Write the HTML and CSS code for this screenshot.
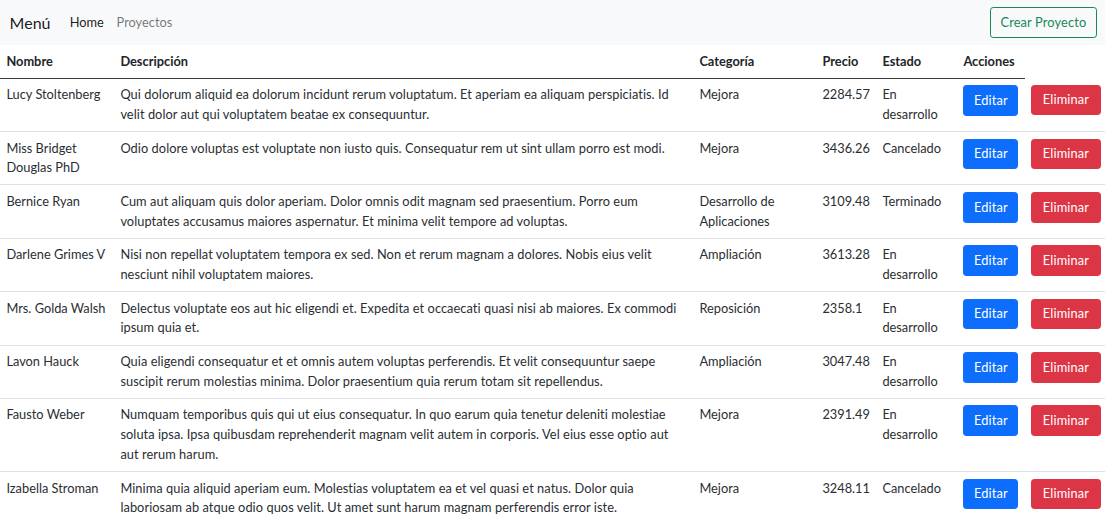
FILE: index.html
```html
<!DOCTYPE html>
<html lang="es">
<head>
<meta charset="utf-8">
<title>Proyectos</title>
<link rel="stylesheet" href="styles.css">
</head>
<body>
<nav class="navbar">
  <div class="nav-left">
    <a class="brand" href="#">Menú</a>
    <a class="nav-link active" href="#">Home</a>
    <a class="nav-link" href="#">Proyectos</a>
  </div>
  <a class="btn btn-outline-success" href="#">Crear Proyecto</a>
</nav>
<table class="table">
  <colgroup>
    <col class="c-nombre"><col class="c-desc"><col class="c-cat"><col class="c-precio"><col class="c-estado"><col class="c-acc"><col class="c-del">
  </colgroup>
  <thead>
    <tr><th>Nombre</th><th>Descripción</th><th>Categoría</th><th>Precio</th><th>Estado</th><th>Acciones</th></tr>
  </thead>
  <tbody>
    <tr><td>Lucy Stoltenberg</td><td class="desc">Qui dolorum aliquid ea dolorum incidunt rerum voluptatum. Et aperiam ea aliquam perspiciatis. Id velit dolor aut qui voluptatem beatae ex consequuntur.</td><td>Mejora</td><td>2284.57</td><td>En desarrollo</td><td><a class="btn btn-primary" href="#">Editar</a></td><td><a class="btn btn-danger" href="#">Eliminar</a></td></tr>
    <tr><td>Miss Bridget Douglas PhD</td><td class="desc">Odio dolore voluptas est voluptate non iusto quis. Consequatur rem ut sint ullam porro est modi.</td><td>Mejora</td><td>3436.26</td><td>Cancelado</td><td><a class="btn btn-primary" href="#">Editar</a></td><td><a class="btn btn-danger" href="#">Eliminar</a></td></tr>
    <tr><td>Bernice Ryan</td><td class="desc">Cum aut aliquam quis dolor aperiam. Dolor omnis odit magnam sed praesentium. Porro eum voluptates accusamus maiores aspernatur. Et minima velit tempore ad voluptas.</td><td>Desarrollo de Aplicaciones</td><td>3109.48</td><td>Terminado</td><td><a class="btn btn-primary" href="#">Editar</a></td><td><a class="btn btn-danger" href="#">Eliminar</a></td></tr>
    <tr><td>Darlene Grimes V</td><td class="desc">Nisi non repellat voluptatem tempora ex sed. Non et rerum magnam a dolores. Nobis eius velit nesciunt nihil voluptatem maiores.</td><td>Ampliación</td><td>3613.28</td><td>En desarrollo</td><td><a class="btn btn-primary" href="#">Editar</a></td><td><a class="btn btn-danger" href="#">Eliminar</a></td></tr>
    <tr><td>Mrs. Golda Walsh</td><td class="desc">Delectus voluptate eos aut hic eligendi et. Expedita et occaecati quasi nisi ab maiores. Ex commodi ipsum quia et.</td><td>Reposición</td><td>2358.1</td><td>En desarrollo</td><td><a class="btn btn-primary" href="#">Editar</a></td><td><a class="btn btn-danger" href="#">Eliminar</a></td></tr>
    <tr><td>Lavon Hauck</td><td class="desc">Quia eligendi consequatur et et omnis autem voluptas perferendis. Et velit consequuntur saepe suscipit rerum molestias minima. Dolor praesentium quia rerum totam sit repellendus.</td><td>Ampliación</td><td>3047.48</td><td>En desarrollo</td><td><a class="btn btn-primary" href="#">Editar</a></td><td><a class="btn btn-danger" href="#">Eliminar</a></td></tr>
    <tr><td>Fausto Weber</td><td class="desc">Numquam temporibus quis qui ut eius consequatur. In quo earum quia tenetur deleniti molestiae soluta ipsa. Ipsa quibusdam reprehenderit magnam velit autem in corporis. Vel eius esse optio aut aut rerum harum.</td><td>Mejora</td><td>2391.49</td><td>En desarrollo</td><td><a class="btn btn-primary" href="#">Editar</a></td><td><a class="btn btn-danger" href="#">Eliminar</a></td></tr>
    <tr><td>Izabella Stroman</td><td class="desc">Minima quia aliquid aperiam eum. Molestias voluptatem ea et vel quasi et natus. Dolor quia laboriosam ab atque odio quos velit. Ut amet sunt harum magnam perferendis error iste.</td><td>Mejora</td><td>3248.11</td><td>Cancelado</td><td><a class="btn btn-primary" href="#">Editar</a></td><td><a class="btn btn-danger" href="#">Eliminar</a></td></tr>
  </tbody>
</table>
</body>
</html>
```
FILE: styles.css
```css
* { box-sizing: border-box; }
html, body { margin: 0; padding: 0; }
body {
  font-family: Lato, "Noto Sans", sans-serif;
  font-size: 12.8px;
  line-height: 1.5;
  color: #2a2e32;
  background: #fff;
}
a { text-decoration: none; }
.navbar {
  display: flex;
  align-items: center;
  justify-content: space-between;
  background: #f8f9fa;
  padding: 6.6px 8px 6.6px 9.6px;
}
.nav-left { display: flex; align-items: center; }
.brand {
  font-size: 16px;
  color: rgba(0,0,0,.9);
  margin-right: 12.8px;
  line-height: 1.5;
}
.nav-link {
  color: rgba(0,0,0,.55);
  padding: 6.4px;
}
.nav-link.active { color: rgba(0,0,0,.9); }
.btn {
  display: inline-block;
  padding: 4.8px 10.4px;
  border: 1px solid transparent;
  border-radius: 3.2px;
  font-size: 12.8px;
  line-height: 19.2px;
  letter-spacing: 0.15px;
  text-align: center;
  white-space: nowrap;
}
.btn-outline-success { color: #198754; border-color: #198754; padding: 4.8px 9.6px; }
.btn-primary { color: #fff; background: #0d6efd; border-color: #0d6efd; padding: 4.8px 9.6px; }
.btn-danger { color: #fff; background: #dc3545; border-color: #dc3545; }
.table {
  width: 100%;
  border-collapse: collapse;
  table-layout: fixed;
  vertical-align: top;
  line-height: 19.8px;
}
.c-nombre { width: 114px; }
.c-desc { width: 579px; }
.c-cat { width: 123px; }
.c-precio { width: 60px; }
.c-estado { width: 81px; }
.c-acc { width: 68px; }
.c-del { width: 80px; }
.table th, .table td {
  padding: 6.4px;
  text-align: left;
  vertical-align: top;
}
.table th {
  font-weight: 700;
  color: #212529;
  border-bottom: 1.5px solid #3a3d40;
}
.table td { border-bottom: 1px solid #dee2e6; }
.table td.desc { letter-spacing: 0.06px; }
.table td:last-child { padding-right: 0; }
```
